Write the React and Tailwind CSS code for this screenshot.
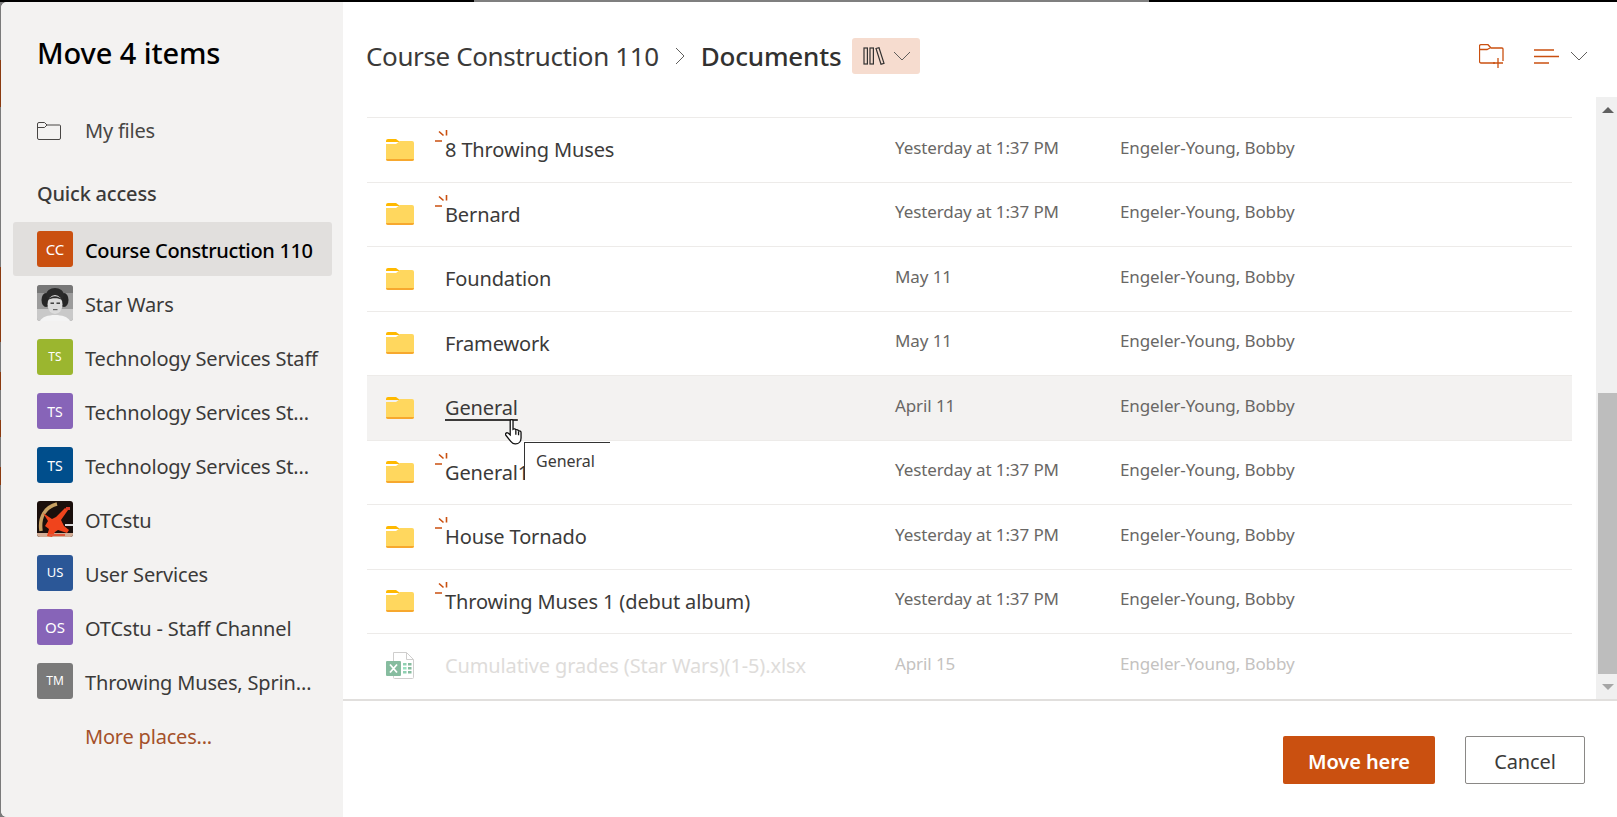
import React from "react";

const FONT = "font-['Noto_Sans','Open_Sans',sans-serif]";

const places = [
  { name: "Course Construction 110", initials: "CC", color: "bg-[#ca5010]", selected: true, size: "text-[15px]" },
  { name: "Star Wars", photo: "leia" },
  { name: "Technology Services Staff", initials: "TS", color: "bg-[#9bb62f]", size: "text-[12px]" },
  { name: "Technology Services St…", initials: "TS", color: "bg-[#8764b8]", size: "text-[14px]" },
  { name: "Technology Services St…", initials: "TS", color: "bg-[#004e8c]", size: "text-[14px]" },
  { name: "OTCstu", photo: "otc" },
  { name: "User Services", initials: "US", color: "bg-[#2b5797]", size: "text-[13px]" },
  { name: "OTCstu - Staff Channel", initials: "OS", color: "bg-[#8764b8]", size: "text-[15px]" },
  { name: "Throwing Muses, Sprin…", initials: "TM", color: "bg-[#7a7a7a]", size: "text-[12px]" },
];

const YESTERDAY = "Yesterday at 1:37 PM";

const rows = [
  { name: "8 Throwing Muses", date: YESTERDAY, isNew: true },
  { name: "Bernard", date: YESTERDAY, isNew: true },
  { name: "Foundation", date: "May 11" },
  { name: "Framework", date: "May 11" },
  { name: "General", date: "April 11", hover: true },
  { name: "General1", date: YESTERDAY, isNew: true },
  { name: "House Tornado", date: YESTERDAY, isNew: true },
  { name: "Throwing Muses 1 (debut album)", date: YESTERDAY, isNew: true },
  { name: "Cumulative grades (Star Wars)(1-5).xlsx", date: "April 15", disabled: true },
];

const LeiaPhoto = () => (
  <svg viewBox="0 0 36 36" className="w-9 h-9 shrink-0 rounded-[3px]">
    <rect width="36" height="36" fill="#9c9c9c" />
    <g className="blur-[0.7px]">
      <rect width="36" height="8" fill="#777" />
      <rect y="24" width="36" height="12" fill="#c9c9c9" />
      <ellipse cx="9" cy="15" rx="4.5" ry="7" fill="#262626" />
      <ellipse cx="27" cy="15" rx="4.5" ry="7" fill="#262626" />
      <ellipse cx="18" cy="10" rx="9" ry="7" fill="#2a2a2a" />
      <ellipse cx="18" cy="19.5" rx="7.5" ry="9.5" fill="#dcdcdc" />
      <path d="M11 15c3-5 11-5 14 0-3-2.4-11-2.4-14 0Z" fill="#2a2a2a" />
      <rect x="13.5" y="17.5" width="3.5" height="1.4" fill="#333" />
      <rect x="19.5" y="17.5" width="3.5" height="1.4" fill="#333" />
      <rect x="16" y="24" width="4.5" height="1.2" fill="#666" />
      <path d="M3 36c2-4 8-6 15-6s13 2 15 6Z" fill="#f4f4f4" />
    </g>
  </svg>
);

const OtcPhoto = () => (
  <svg viewBox="0 0 36 36" className="w-9 h-9 shrink-0 rounded-[3px]">
    <rect width="36" height="36" fill="#1a0f0c" />
    <g className="blur-[0.5px]">
      <rect y="32" width="36" height="4" fill="#d3ad96" />
      <path d="M4 30C2 16 8 6 20 3" fill="none" stroke="#c6a063" strokeWidth="3.5" />
      <path d="M6 12l9 6 4-2 9-9 3 2-7 10 3 6 5 4-2 3-9-3-3 2-3 5-5-1 2-7-4-3 3-5Z" fill="#f0441c" />
      <rect x="29" y="6" width="4" height="3" fill="#d93a2a" />
      <rect x="28" y="23" width="8" height="2" fill="#dddddd" />
      <rect x="12" y="33" width="16" height="2" fill="#e0563a" />
    </g>
  </svg>
);

const FolderOutline = () => (
  <svg viewBox="0 0 24 18" className="w-6 h-[18px]" fill="none" stroke="#484644" strokeWidth="1">
    <path d="M.5 2A1.5 1.5 0 0 1 2 .5h5.5L10 3h12.5a1 1 0 0 1 1 1v12a1.5 1.5 0 0 1-1.5 1.5H2A1.5 1.5 0 0 1 .5 16Z" />
    <path d="M.5 5.5H7.5L10 3" />
  </svg>
);

const FolderIcon = () => (
  <svg viewBox="0 0 28 22" className="w-7 h-[22px] shrink-0">
    <path d="M0 2a2 2 0 0 1 2-2h8l4 3H0Z" fill="#ffb900" />
    <path d="M0 5h10l4-3h12a2 2 0 0 1 2 2v16a2 2 0 0 1-2 2H2a2 2 0 0 1-2-2Z" fill="#ffd75e" />
    <path d="M0 20h28a2 2 0 0 1-2 2H2a2 2 0 0 1-2-2Z" fill="#f7a82e" />
  </svg>
);

const ExcelIcon = () => (
  <svg viewBox="0 0 28 27" className="w-7 h-[27px] shrink-0 opacity-50">
    <path d="M7.5.5h13l7 7v18a1 1 0 0 1-1 1h-18a1 1 0 0 1-1-1Z" fill="#fff" stroke="#a19f9d" />
    <path d="M20.5.5v7h7" fill="none" stroke="#a19f9d" />
    <rect x="17" y="11" width="3.5" height="2.5" fill="#21a366" />
    <rect x="22" y="11" width="3.5" height="2.5" fill="#107c41" />
    <rect x="17" y="15" width="3.5" height="2.5" fill="#33c481" />
    <rect x="22" y="15" width="3.5" height="2.5" fill="#107c41" />
    <rect x="17" y="19" width="3.5" height="2.5" fill="#21a366" />
    <rect x="22" y="19" width="3.5" height="2.5" fill="#107c41" />
    <rect y="9" width="15" height="15" rx="1" fill="#107c41" />
    <path d="M4 12.5l7 8M11 12.5l-7 8" stroke="#fff" strokeWidth="1.8" />
  </svg>
);

const Spark = () => (
  <svg viewBox="0 0 13 12" className="absolute left-[-10px] top-[-6px] w-[13px] h-3" stroke="#ca5010" strokeWidth="1.6" fill="none">
    <path d="M11.5 0v5.5M4 1.5l4.5 4M0 11h7" />
  </svg>
);

const HandCursor = () => (
  <svg viewBox="0.5 0.5 16 24" className="absolute left-[138px] top-[43px] w-[18px] h-[26px]" fill="#fff" stroke="#111" strokeWidth="1.2">
    <path d="M5 2.2c0-1.6 2.6-1.6 2.6 0V10c1-.6 2.4-.4 2.6.6.9-.5 2.3-.2 2.5.9 1-.3 2.3.2 2.3 1.5V18c0 3-2 5.5-5 5.5H9.5c-2 0-3-1-4-2.3L1 15.5c-1-1.4.5-3 2-2l2 1.6Z" />
    <path d="M10.2 11v4M12.7 12v3.5" fill="none" />
  </svg>
);

const Row = ({ row }) => (
  <div className={`relative flex items-center h-[64.5px] border-t border-[#edebe9] pl-[19px] ${row.hover ? "bg-[#f3f2f1] z-10" : ""}`}>
    {row.disabled ? <ExcelIcon /> : <FolderIcon />}
    <div className="w-[481px] pl-[31px] mt-[1px] shrink-0">
      <span className={`relative text-[20px] leading-7 tracking-[-0.13px] ${row.disabled ? "text-[#dedcda]" : "text-[#3b3a39]"} ${row.hover ? "underline decoration-2 underline-offset-[4px] [text-decoration-skip-ink:none]" : ""}`}>
        {row.isNew && <Spark />}
        {row.name}
      </span>
    </div>
    <div className={`w-[225px] shrink-0 mb-[4px] text-[17px] leading-6 tracking-[-0.1px] ${row.disabled ? "text-[#c4c2c0]" : "text-[#696765]"}`}>{row.date}</div>
    <div className={`mb-[4px] text-[17px] leading-6 tracking-[-0.1px] ${row.disabled ? "text-[#c4c2c0]" : "text-[#696765]"}`}>Engeler-Young, Bobby</div>
    {row.hover && <HandCursor />}
    {row.hover && (
      <div className="absolute left-[157px] top-[66px] w-[86px] h-[38px] bg-white border-t border-l border-[#333] pl-[11px] pt-[6px] text-[16px] leading-6 text-[#3b3a39]">
        General
      </div>
    )}
  </div>
);

const LeftEdge = () => (
  <div className="w-px shrink-0 flex flex-col bg-[#7a7a7a]">
    <div className="h-[58px]" />
    <div className="h-[47px] bg-[#8a3a10]" />
    <div className="h-[160px]" />
    <div className="h-[75px] bg-[#8a3a10]" />
    <div className="h-[30px]" />
    <div className="h-[18px] bg-[#8a3a10]" />
    <div className="h-[30px]" />
    <div className="h-[17px] bg-[#8a3a10]" />
    <div className="h-[30px]" />
    <div className="h-[18px] bg-[#8a3a10]" />
  </div>
);

export default function App() {
  return (
    <div className={`${FONT} w-[1617px] h-[817px] flex flex-col overflow-hidden bg-[#7a7a7a]`}>
      <div className="h-[2px] shrink-0 flex bg-black">
        <div className="w-[474px]" />
        <div className="w-[675px] bg-[#7f7f7f]" />
      </div>
      <div className="flex-1 flex min-h-0">
        <LeftEdge />
        <div className="flex-1 flex min-w-0 rounded-l-[6px] overflow-hidden bg-white">
          <aside className="w-[342px] shrink-0 bg-[#f3f2f1] pt-[33px]">
            <h1 className="pl-[36px] text-[29px] leading-9 font-medium tracking-[-0.1px] text-black">Move 4 items</h1>
            <div className="flex items-center gap-[24px] pl-[36px] mt-[46px] h-7">
              <FolderOutline />
              <span className="text-[20px] tracking-[-0.2px] text-[#484644]">My files</span>
            </div>
            <div className="pl-[36px] mt-[35px] h-7 text-[20px] leading-7 font-medium tracking-[-0.2px] text-[#3b3a39]">Quick access</div>
            <ul className="mt-[14px] pl-[12px] pr-[11px]">
              {places.map((p, i) => (
                <li key={i} className={`h-[54px] flex items-center gap-[12px] pl-[24px] rounded-[3px] ${p.selected ? "bg-[#e1dfdd]" : ""}`}>
                  {p.photo === "leia" && <LeiaPhoto />}
                  {p.photo === "otc" && <OtcPhoto />}
                  {p.initials && (
                    <div className={`w-9 h-9 shrink-0 rounded-[3px] flex items-center justify-center text-white ${p.color} ${p.size}`}>{p.initials}</div>
                  )}
                  <span className={`pt-[3px] text-[20px] whitespace-nowrap ${p.selected ? "font-medium tracking-[-0.33px] text-black" : "tracking-[-0.17px] text-[#3b3a39]"}`}>{p.name}</span>
                </li>
              ))}
            </ul>
            <div className="pl-[84px] mt-[15px] text-[20px] leading-7 tracking-[-0.2px] text-[#a4512a]">More places...</div>
          </aside>
          <main className="flex-1 min-w-0 flex flex-col">
            <header className="h-[95px] shrink-0 flex items-center pt-[13px] pl-[23px] pr-[29px]">
              <span className="text-[26px] tracking-[-0.38px] text-[#3b3a39]">Course Construction 110</span>
              <svg viewBox="0 0 10 18" className="w-[10px] h-[18px] ml-[16px]" fill="none" stroke="#605e5c">
                <path d="M1 1l8 8-8 8" />
              </svg>
              <span className="ml-[16px] text-[26px] font-medium tracking-[-0.2px] text-[#323130]">Documents</span>
              <button className="ml-[11px] w-[68px] h-9 rounded-[3px] bg-[#f6dccf] flex items-center pl-[11px]">
                <svg viewBox="0 0 22 18" className="w-[22px] h-[18px]" fill="none" stroke="#323130" strokeWidth="1.2">
                  <rect x="1" y="1" width="3.4" height="16" />
                  <rect x="7" y="1" width="3.4" height="16" />
                  <path d="M13 1.5l3-.8 5 15.6-3 .9Z" />
                </svg>
                <svg viewBox="0 0 18 10" className="w-[18px] h-[10px] ml-2" fill="none" stroke="#605e5c">
                  <path d="M1 1l8 8 8-8" />
                </svg>
              </button>
              <svg viewBox="0 0 25 24" className="w-[25px] h-6 ml-auto" fill="none" stroke="#ca5010" strokeWidth="1.3">
                <path d="M16 19H2a1.5 1.5 0 0 1-1.5-1.5V2A1.5 1.5 0 0 1 2 .7h7L12 4h11a1 1 0 0 1 1 1v12" />
                <path d="M.5 5.5H8L11 4" />
                <path d="M19 14v10M14 19h10" />
              </svg>
              <svg viewBox="0 0 25 15" className="w-[25px] h-[15px] ml-[30px]" fill="none" stroke="#ca5010" strokeWidth="1.4">
                <path d="M0 1h20M0 7.5h25M0 14h15" />
              </svg>
              <svg viewBox="0 0 18 10" className="w-[18px] h-[10px] ml-[11px]" fill="none" stroke="#605e5c">
                <path d="M1 1l8 8 8-8" />
              </svg>
            </header>
            <div className="flex-1 min-h-0 flex">
              <div className="flex-1 min-w-0 pl-[24px] pr-[24px] pt-[20px] overflow-hidden">
                {rows.map((r) => (
                  <Row key={r.name} row={r} />
                ))}
              </div>
              <div className="w-[21px] shrink-0 flex flex-col items-end bg-[#f0f0f0]">
                <div className="w-[19px] h-[26px] flex items-center justify-center">
                  <div className="w-0 h-0 border-x-[6px] border-x-transparent border-b-[6px] border-b-[#606060]" />
                </div>
                <div className="h-[270px]" />
                <div className="w-[19px] flex-1 bg-[#bdbdbd]" />
                <div className="w-[19px] h-[25px] flex items-center justify-center">
                  <div className="w-0 h-0 border-x-[6px] border-x-transparent border-t-[6px] border-t-[#a6a6a6]" />
                </div>
              </div>
            </div>
            <footer className="h-[118px] shrink-0 border-t-2 border-[#e1dfdd] flex justify-end items-start gap-[30px] pt-[35px] pr-[32px]">
              <button className="w-[152px] h-12 pt-[3px] rounded-[2px] bg-[#ca5010] text-white text-[20px] font-semibold tracking-[-0.1px]">Move here</button>
              <button className="w-[120px] h-12 pt-[3px] rounded-[2px] bg-white border border-[#8a8886] text-[20px] tracking-[-0.1px] text-[#3b3a39]">Cancel</button>
            </footer>
          </main>
        </div>
      </div>
    </div>
  );
}
